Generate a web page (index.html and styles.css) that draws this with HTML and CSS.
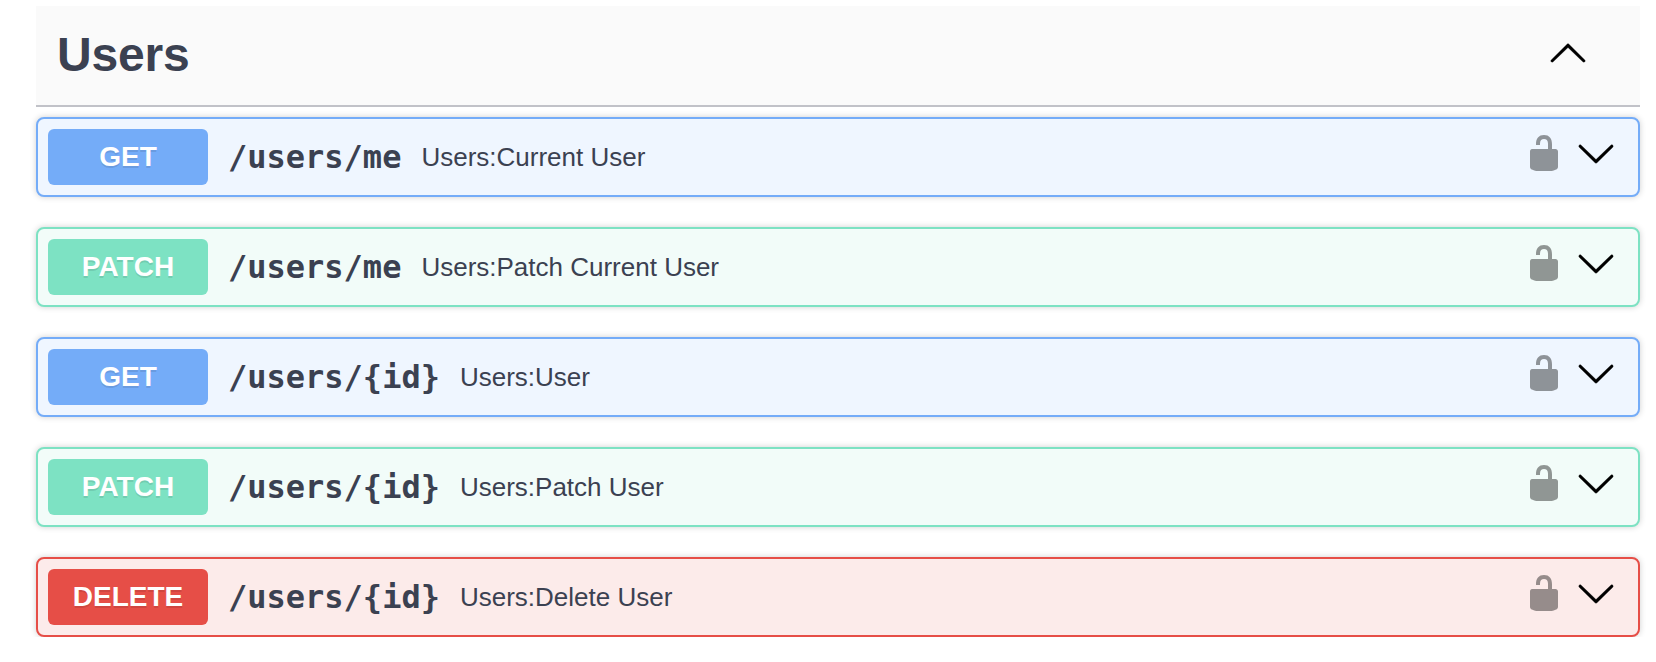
FILE: index.html
```html
<!DOCTYPE html>
<html lang="en">
<head>
<meta charset="utf-8">
<title>Users</title>
<link rel="stylesheet" href="styles.css">
</head>
<body>
<svg class="defs" aria-hidden="true">
  <symbol id="unlocked" viewBox="0 0 20 20"><path d="M15.8 8H14V5.6C14 2.703 12.665 1 10 1 7.334 1 6 2.703 6 5.6V6h2v-.801C8 3.754 8.797 3 10 3c1.203 0 2 .754 2 2.199V8H4c-.553 0-1 .646-1 1.199V17c0 .549.428 1.139.951 1.307l1.197.387C5.672 18.861 6.55 19 7.1 19h5.8c.549 0 1.428-.139 1.951-.307l1.196-.387c.524-.167.953-.757.953-1.306V9.199C17 8.646 16.352 8 15.8 8z"/></symbol>
  <symbol id="arrow-down" viewBox="0 0 20 20"><path d="M17.418 6.109c.272-.268.709-.268.979 0s.271.701 0 .969l-7.908 7.83c-.27.268-.707.268-.979 0l-7.908-7.83c-.27-.268-.27-.701 0-.969.271-.268.709-.268.979 0L10 13.25l7.418-7.141z"/></symbol>
  <symbol id="arrow-up" viewBox="0 0 20 20"><path d="M17.418 14.908c.272.268.709.268.979 0s.271-.701 0-.969l-7.908-7.83c-.27-.268-.707-.268-.979 0l-7.908 7.83c-.27.268-.27.701 0 .969.271.268.709.268.979 0L10 7.767l7.418 7.141z"/></symbol>
</svg>
<main class="section">
  <header class="section-header">
    <h3 class="section-title">Users</h3>
    <svg class="icon arrow"><use href="#arrow-up"/></svg>
  </header>
  <div class="operations">
    <div class="operation get">
      <span class="method">GET</span>
      <span class="path">/users/me</span>
      <span class="summary">Users:Current User</span>
      <svg class="icon lock"><use href="#unlocked"/></svg>
      <svg class="icon arrow"><use href="#arrow-down"/></svg>
    </div>
    <div class="operation patch">
      <span class="method">PATCH</span>
      <span class="path">/users/me</span>
      <span class="summary">Users:Patch Current User</span>
      <svg class="icon lock"><use href="#unlocked"/></svg>
      <svg class="icon arrow"><use href="#arrow-down"/></svg>
    </div>
    <div class="operation get">
      <span class="method">GET</span>
      <span class="path">/users/{id}</span>
      <span class="summary">Users:User</span>
      <svg class="icon lock"><use href="#unlocked"/></svg>
      <svg class="icon arrow"><use href="#arrow-down"/></svg>
    </div>
    <div class="operation patch">
      <span class="method">PATCH</span>
      <span class="path">/users/{id}</span>
      <span class="summary">Users:Patch User</span>
      <svg class="icon lock"><use href="#unlocked"/></svg>
      <svg class="icon arrow"><use href="#arrow-down"/></svg>
    </div>
    <div class="operation delete">
      <span class="method">DELETE</span>
      <span class="path">/users/{id}</span>
      <span class="summary">Users:Delete User</span>
      <svg class="icon lock"><use href="#unlocked"/></svg>
      <svg class="icon arrow"><use href="#arrow-down"/></svg>
    </div>
  </div>
</main>
</body>
</html>
```
FILE: styles.css
```css
* {
  box-sizing: border-box;
}

body {
  margin: 0;
  background: #fff;
  color: #3b4151;
  font-family: "Liberation Sans", Arial, sans-serif;
}

.defs {
  display: none;
}

.section {
  padding: 6px 16px 0 36px;
}

.section-header {
  display: flex;
  align-items: center;
  justify-content: space-between;
  height: 101px;
  padding: 0 52px 7px 20px;
  background: #fafafa;
  border-bottom: 2px solid #c1c2c8;
}

.section-title {
  margin: 0;
  padding: 6px 0 0 1px;
  font-size: 48px;
  line-height: 56px;
  letter-spacing: -0.2px;
}

.operations {
  display: flex;
  flex-direction: column;
  gap: 30px;
  padding-top: 10px;
}

.operation {
  display: flex;
  align-items: center;
  height: 80px;
  padding: 0 22px 0 10px;
  border: 2px solid;
  border-radius: 8px;
  box-shadow: 0 0 6px rgba(0, 0, 0, 0.19);
}

.method {
  width: 160px;
  height: 56px;
  border-radius: 6px;
  color: #fff;
  font-size: 28px;
  font-weight: 700;
  line-height: 56px;
  text-align: center;
  text-shadow: 0 2px 0 rgba(0, 0, 0, 0.1);
}

.path {
  padding: 0 20px;
  font-family: "DejaVu Sans Mono", monospace;
  font-size: 32px;
  font-weight: 700;
}

.summary {
  flex: 1;
  font-size: 26px;
}

.icon {
  width: 40px;
  height: 40px;
  fill: #000;
}

.arrow {
  stroke: #000;
  stroke-width: 0.15;
}

.operation .icon {
  margin-bottom: 8px;
}

.operation .lock {
  margin-right: 12px;
  opacity: 0.4;
}

.get {
  background: #eff6ff;
  border-color: #74acf8;
}

.get .method {
  background: #74acf8;
}

.patch {
  background: #f2fcf9;
  border-color: #7de2c3;
}

.patch .method {
  background: #7de2c3;
}

.delete {
  background: #fcebea;
  border-color: #e64e47;
}

.delete .method {
  background: #e64e47;
}
```
